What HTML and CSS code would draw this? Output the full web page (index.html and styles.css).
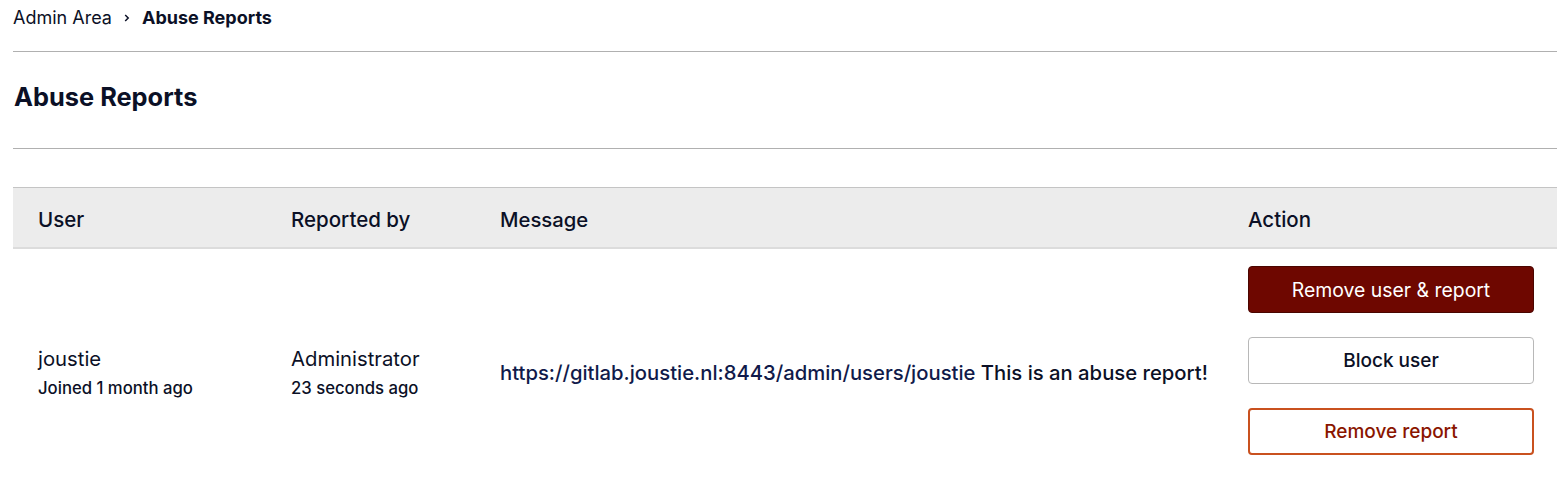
FILE: index.html
```html
<!DOCTYPE html>
<html>
<head>
<meta charset="utf-8">
<link rel="stylesheet" href="styles.css">
</head>
<body>
<div class="page">
  <nav class="breadcrumb">
    <span class="crumb">Admin Area</span>
    <svg class="sep" width="8" height="10" viewBox="0 0 8 10"><path d="M2.2 2 L5.2 5 L2.2 8" fill="none" stroke="#0b1026" stroke-width="1.5"/></svg>
    <span class="crumb current">Abuse Reports</span>
  </nav>
  <hr class="rule">
  <h1 class="title">Abuse Reports</h1>
  <hr class="rule rule-bottom">
  <div class="table">
    <div class="thead">
      <div class="th c-user">User</div>
      <div class="th c-by">Reported by</div>
      <div class="th c-msg">Message</div>
      <div class="th c-act">Action</div>
    </div>
    <div class="trow">
      <div class="td c-user">
        <div class="name">joustie</div>
        <div class="meta">Joined 1 month ago</div>
      </div>
      <div class="td c-by">
        <div class="name">Administrator</div>
        <div class="meta">23 seconds ago</div>
      </div>
      <div class="td c-msg">
        <span class="link">https://gitlab.joustie.nl:8443/admin/users/joustie</span> This is an abuse report!
      </div>
      <div class="td c-act">
        <div class="actions">
          <button class="btn btn-danger">Remove user &amp; report</button>
          <button class="btn btn-default">Block user</button>
          <button class="btn btn-outline">Remove report</button>
        </div>
      </div>
    </div>
  </div>
</div>
</body>
</html>
```
FILE: styles.css
```css
html, body {
  margin: 0;
  padding: 0;
  background: #fff;
}
body {
  font-family: Inter, "Noto Sans", sans-serif;
  color: #0b1026;
}
.page {
  padding: 0 10px 0 13px;
}
.breadcrumb {
  display: flex;
  align-items: center;
  height: 34px;
  font-size: 18px;
}
.crumb.current {
  font-weight: 700;
}
.sep {
  margin: 1px 11px 0 11px;
}
.rule {
  border: 0;
  border-top: 1px solid #b0b0b0;
  margin: 17px 0 0 0;
  height: 0;
}
.rule-bottom {
  margin-top: 0;
}
.title {
  margin: 0;
  font-size: 25.4px;
  font-weight: 700;
  height: 96px;
  box-sizing: border-box;
  padding: 0 0 7px 1px;
  display: flex;
  align-items: center;
}
.table {
  margin-top: 38px;
}
.thead, .trow {
  display: grid;
  grid-template-columns: 253px 209px 748px 1fr;
}
.thead {
  background: #ececec;
  border-top: 1px solid #c4c4c4;
  border-bottom: 2px solid #dcdcdc;
  height: 59px;
  align-items: center;
}
.th {
  font-size: 20.5px;
  font-weight: 500;
  padding: 3px 0 0 25px;
}
.trow {
  align-items: center;
  padding: 17px 0 16px;
}
.td {
  padding-left: 25px;
}
.name {
  font-size: 20.3px;
  line-height: 24px;
}
.meta {
  font-size: 16.7px;
  font-weight: 500;
  line-height: 20px;
  margin-top: 7px;
}
.c-msg {
  font-size: 20.25px;
  font-weight: 500;
}
.link {
  color: #101a4a;
}
.actions {
  display: flex;
  flex-direction: column;
  width: 286px;
}
.btn {
  font-family: Inter, "Noto Sans", sans-serif;
  font-size: 19px;
  height: 47px;
  margin-bottom: 24px;
  border-radius: 4px;
  background: #fff;
  cursor: pointer;
}
.btn-danger {
  background: #6e0700;
  border: 1px solid #4a0500;
  color: #fff;
  font-weight: 400;
  font-size: 19.4px;
}
.btn-default {
  border: 1px solid #b8b8b8;
  color: #0b1026;
  font-weight: 500;
}
.btn-outline {
  border: 2px solid #c9511f;
  color: #8a1500;
  font-weight: 500;
}
```
